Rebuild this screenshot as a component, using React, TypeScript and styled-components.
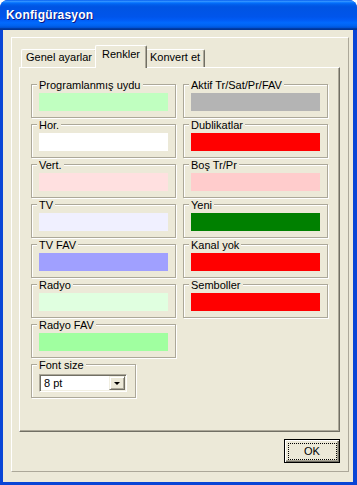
import React from 'react'
import styled, { createGlobalStyle } from 'styled-components'

const GlobalStyle = createGlobalStyle`
  html, body {
    margin: 0;
    padding: 0;
    background: #ffffff;
  }
  body {
    font-family: "Liberation Sans", Arial, sans-serif;
    font-size: 11px;
    color: #000;
  }
`

const Window = styled.div`
  width: 357px;
  height: 485px;
  display: flex;
  flex-direction: column;
  border-radius: 8px 8px 0 0;
  overflow: hidden;
  background: #0845d6;
`

const TitleBar = styled.div`
  height: 30px;
  flex: none;
  display: flex;
  align-items: center;
  padding-left: 6px;
  background: linear-gradient(
    to bottom,
    #0058ee 0%,
    #3593ff 4%,
    #288eff 6%,
    #127dff 8%,
    #036ffc 10%,
    #0262ee 14%,
    #0057e5 20%,
    #0054e3 24%,
    #0055eb 56%,
    #005bf5 66%,
    #026afe 76%,
    #0062ef 86%,
    #0052d6 92%,
    #0040ab 94%,
    #003092 100%
  );
  color: #fff;
  font-weight: bold;
  font-size: 12px;
  letter-spacing: 0.2px;
  text-shadow: 1px 1px 0 #0a1883;
`

const Frame = styled.div`
  flex: 1;
  display: flex;
  padding: 0 4px 3px 3px;
`

const Client = styled.div`
  flex: 1;
  display: flex;
  padding: 7px 4px 10px 8px;
  background: #ece9d8;
`

const Sheet = styled.div`
  flex: 1;
  display: flex;
  flex-direction: column;
  padding: 7px 8px 0 7px;
  border-top: 1px solid #fff;
  border-left: 1px solid #fff;
  border-right: 1px solid #aca899;
  border-bottom: 1px solid #aca899;
`

const TabStrip = styled.div`
  height: 22px;
  flex: none;
  display: flex;
  align-items: flex-end;
  padding-left: 2px;
`

const Tab = styled.div<{ $active?: boolean }>`
  position: relative;
  z-index: ${(p) => (p.$active ? 2 : 1)};
  box-sizing: border-box;
  height: ${(p) => (p.$active ? 23 : 18)}px;
  margin: 0 ${(p) => (p.$active ? -2 : 0)}px ${(p) => (p.$active ? -1 : 0)}px;
  padding: ${(p) => (p.$active ? 2 : 1)}px ${(p) => (p.$active ? 6 : 4)}px 0;
  line-height: 13px;
  white-space: nowrap;
  background: #ece9d8;
  border-top: 1px solid #fff;
  border-left: 1px solid #fff;
  border-right: 1px solid #716f64;
  border-radius: 2px 2px 0 0;
  box-shadow: inset -1px 0 0 #aca899;
`

const Page = styled.div`
  height: 365px;
  flex: none;
  box-sizing: border-box;
  display: grid;
  grid-template-columns: 145px 145px;
  column-gap: 7px;
  align-items: start;
  padding: 16px 0 0 11px;
  border-top: 1px solid #fff;
  border-left: 1px solid #fff;
  border-right: 1px solid #716f64;
  border-bottom: 1px solid #716f64;
  box-shadow: inset -1px -1px 0 #aca899;
  background: #ece9d8;
`

const Column = styled.div`
  display: flex;
  flex-direction: column;
  gap: 6px;
`

const Group = styled.div<{ $width?: number }>`
  position: relative;
  box-sizing: border-box;
  width: ${(p) => p.$width ?? 145}px;
  height: 34px;
  padding: 8px 7px 0;
  border: 1px solid #aca899;
  box-shadow: inset 1px 1px 0 #fff, 1px 1px 0 #fff;
`

const Legend = styled.span`
  position: absolute;
  top: -5px;
  left: 5px;
  padding: 0 2px;
  line-height: 11px;
  white-space: nowrap;
  background: #ece9d8;
`

const Swatch = styled.div<{ $color: string }>`
  height: 18px;
  background: ${(p) => p.$color};
`

const Combo = styled.div`
  box-sizing: border-box;
  width: 88px;
  height: 18px;
  margin-top: 1px;
  display: flex;
  align-items: stretch;
  background: #fff;
  border-top: 1px solid #aca899;
  border-left: 1px solid #aca899;
  border-right: 1px solid #fff;
  border-bottom: 1px solid #fff;
  box-shadow: inset 1px 1px 0 #716f64, inset -1px -1px 0 #f1efe2;
  padding: 1px;
`

const ComboText = styled.div`
  flex: 1;
  padding-left: 3px;
  line-height: 14px;
`

const ComboButton = styled.div`
  width: 16px;
  box-sizing: border-box;
  display: flex;
  align-items: center;
  justify-content: center;
  background: #ece9d8;
  border-top: 1px solid #f1efe2;
  border-left: 1px solid #f1efe2;
  border-right: 1px solid #716f64;
  border-bottom: 1px solid #716f64;
  box-shadow: inset 1px 1px 0 #fff, inset -1px -1px 0 #aca899;
`

const Arrow = styled.span`
  width: 0;
  height: 0;
  border-left: 3px solid transparent;
  border-right: 3px solid transparent;
  border-top: 3px solid #000;
  margin-top: 1px;
`

const ButtonRow = styled.div`
  display: flex;
  justify-content: flex-end;
  margin-top: 7px;
`

const Button = styled.button`
  position: relative;
  width: 56px;
  height: 24px;
  box-sizing: border-box;
  padding: 0;
  border: 1px solid #000;
  background: #ece9d8;
  box-shadow: inset 1px 1px 0 #fff, inset -1px -1px 0 #716f64, inset -2px -2px 0 #aca899;
  font-family: "Liberation Sans", Arial, sans-serif;
  font-size: 11px;
  color: #000;

  &::after {
    content: '';
    position: absolute;
    top: 3px;
    left: 3px;
    right: 2px;
    bottom: 2px;
    border: 1px dotted #000;
  }
`

const leftColors = [
  { label: 'Programlanmış uydu', color: '#c0ffc0' },
  { label: 'Hor.', color: '#ffffff' },
  { label: 'Vert.', color: '#ffe0e0' },
  { label: 'TV', color: '#f0f0ff' },
  { label: 'TV FAV', color: '#a0a0ff' },
  { label: 'Radyo', color: '#e0ffe0' },
  { label: 'Radyo FAV', color: '#a0ffa0' },
]

const rightColors = [
  { label: 'Aktif Tr/Sat/Pr/FAV', color: '#b4b4b4' },
  { label: 'Dublikatlar', color: '#ff0000' },
  { label: 'Boş Tr/Pr', color: '#ffcccc' },
  { label: 'Yeni', color: '#008000' },
  { label: 'Kanal yok', color: '#ff0000' },
  { label: 'Semboller', color: '#ff0000' },
]

const App = () => {
  return (
    <>
      <GlobalStyle />
      <Window>
        <TitleBar>Konfigürasyon</TitleBar>
        <Frame>
          <Client>
            <Sheet>
              <TabStrip>
                <Tab>Genel ayarlar</Tab>
                <Tab $active>Renkler</Tab>
                <Tab>Konvert et</Tab>
              </TabStrip>
              <Page>
                <Column>
                  {leftColors.map((c) => (
                    <Group key={c.label}>
                      <Legend>{c.label}</Legend>
                      <Swatch $color={c.color} />
                    </Group>
                  ))}
                  <Group $width={105}>
                    <Legend>Font size</Legend>
                    <Combo>
                      <ComboText>8 pt</ComboText>
                      <ComboButton>
                        <Arrow />
                      </ComboButton>
                    </Combo>
                  </Group>
                </Column>
                <Column>
                  {rightColors.map((c) => (
                    <Group key={c.label}>
                      <Legend>{c.label}</Legend>
                      <Swatch $color={c.color} />
                    </Group>
                  ))}
                </Column>
              </Page>
              <ButtonRow>
                <Button>OK</Button>
              </ButtonRow>
            </Sheet>
          </Client>
        </Frame>
      </Window>
    </>
  )
}

export default App
